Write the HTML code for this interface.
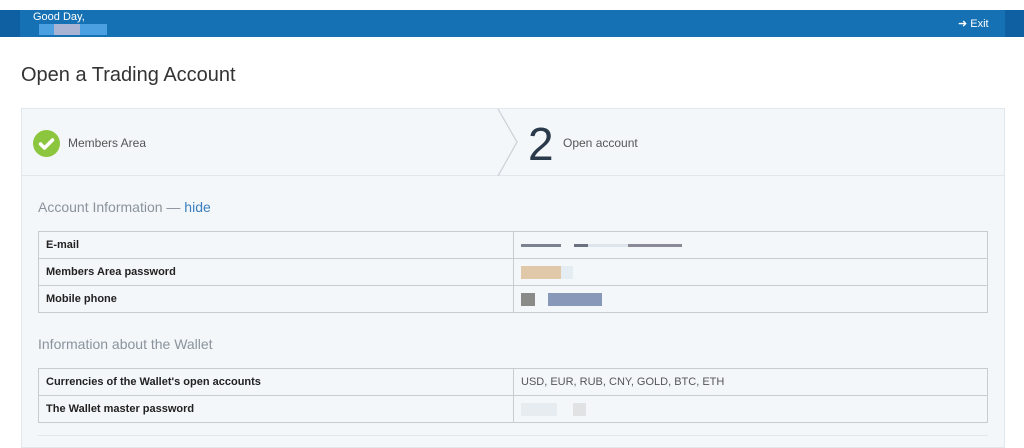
<!DOCTYPE html>
<html><head><meta charset="utf-8"><style>
*{margin:0;padding:0;box-sizing:border-box}
body{width:1024px;height:444px;overflow:hidden;background:#fff;font-family:"Liberation Sans",sans-serif;position:relative}
.bar{position:absolute;top:10px;left:0;width:1024px;height:27px;background:#1571b4}
.bar .l{position:absolute;left:0;top:0;width:20px;height:27px;background:#0e60a2}
.bar .r{position:absolute;right:0;top:0;width:19px;height:27px;background:#0e60a2}
.gd{position:absolute;left:33px;top:1px;color:#fff;font-size:11px}
.exit{position:absolute;left:958px;top:7px;color:#fff;font-size:11px}
h1{position:absolute;left:21px;top:64px;font-weight:normal;font-size:20px;color:#333}
.panel{position:absolute;left:21px;top:108px;width:984px;height:340px;background:#f4f7fa;border:1px solid #e1e7ed}
.steps{position:absolute;left:0;top:0;width:982px;height:67px;border-bottom:1px solid #e1e7ed}
.chk{position:absolute;left:11px;top:21px;width:27px;height:27px;border-radius:50%;background:#8cc63e}
.s1{position:absolute;left:46px;top:27px;font-size:12px;color:#555}
.two{position:absolute;left:506px;top:10px;font-size:46px;color:#2a3a4a;font-weight:normal;line-height:50px}
.s2{position:absolute;left:541px;top:27px;font-size:12px;color:#555}
.sec{position:absolute;left:16px;font-size:14px;color:#8a939c}
.sec a{color:#3a7fbf;text-decoration:none}
table{position:absolute;left:16px;width:950px;border-collapse:collapse;font-size:11px}
td{border:1px solid #c6ccd2;height:27px;padding:0 7px;color:#222}
td:first-child{font-weight:bold;width:475px}
td:last-child{color:#555}
.blk{display:inline-block;height:6px;vertical-align:middle}
</style></head><body>
<div class="bar"><div class="l"></div><div class="r"></div>
<div class="gd">Good Day,</div>
<div style="position:absolute;left:39px;top:14px;width:68px;height:11px;background:#4aa0e0"></div>
<div style="position:absolute;left:54px;top:14px;width:26px;height:11px;background:#a9b3d4"></div>
<div class="exit">&#10140; Exit</div></div>
<h1>Open a Trading Account</h1>
<div class="panel">
<div class="steps">
<div class="chk"><svg width="27" height="27" viewBox="0 0 27 27"><path d="M7.5 14l4 4 8-8" stroke="#fff" stroke-width="3.5" fill="none" stroke-linecap="round" stroke-linejoin="round"/></svg></div>
<div class="s1">Members Area</div>
<svg style="position:absolute;left:475px;top:0" width="24" height="67"><path d="M1 0L20 33L1 67" stroke="#c9d0d7" stroke-width="1.2" fill="none"/></svg>
<div class="two">2</div><div class="s2">Open account</div>
</div>
<div class="sec" style="top:90px">Account Information — <a>hide</a></div>
<table style="top:122px">
<tr><td>E-mail</td><td><span class="blk" style="width:40px;background:#7a8290;height:3px"></span> <span class="blk" style="width:14px;background:#6a7280;height:3px;margin-left:10px"></span><span class="blk" style="width:40px;background:#dde6ec;height:3px"></span><span class="blk" style="width:54px;background:#8a8a96;height:3px"></span></td></tr>
<tr><td>Members Area password</td><td><span class="blk" style="width:40px;height:13px;background:#e0c8a8"></span><span class="blk" style="width:12px;height:13px;background:#e4eef2"></span></td></tr>
<tr><td>Mobile phone</td><td><span class="blk" style="width:14px;height:13px;background:#8a8a88"></span><span class="blk" style="width:54px;height:13px;background:#8898b8;margin-left:13px"></span></td></tr>
</table>
<div class="sec" style="top:227px">Information about the Wallet</div>
<table style="top:259px">
<tr><td>Currencies of the Wallet's open accounts</td><td>USD, EUR, RUB, CNY, GOLD, BTC, ETH</td></tr>
<tr><td>The Wallet master password</td><td><span class="blk" style="width:36px;height:13px;background:#e6ecf0"></span><span class="blk" style="width:13px;height:13px;background:#e0e2e4;margin-left:16px"></span></td></tr>
</table>
<div style="position:absolute;left:16px;top:326px;width:950px;height:1px;background:#e1e7ed"></div>
</div>
</body></html>
